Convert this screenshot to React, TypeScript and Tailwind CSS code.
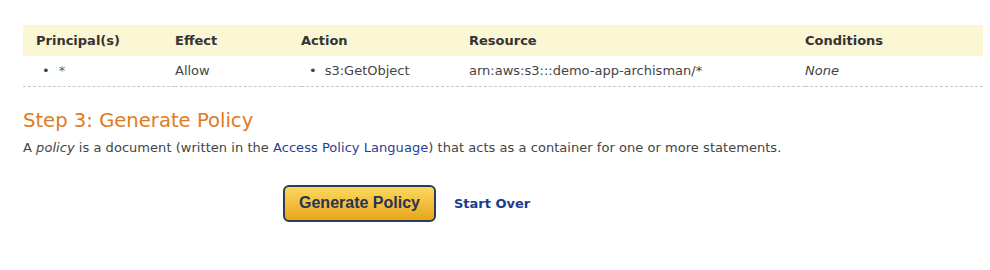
import React from "react";

const font = { fontFamily: '"DejaVu Sans", Verdana, sans-serif' };

export default function App() {
  return (
    <div className="w-[990px] h-[270px] bg-white text-[13px] text-[#444]" style={font}>
      <div className="pt-[25px] pl-[23px] pr-[7px]">
        {/* Statements table */}
        <table className="w-full border-collapse">
          <thead>
            <tr className="bg-[#fbf6d3] h-[31px] text-left text-[#333]">
              <th className="pl-[13px] w-[152px] font-bold">Principal(s)</th>
              <th className="w-[126px] font-bold">Effect</th>
              <th className="w-[168px] font-bold">Action</th>
              <th className="w-[336px] font-bold">Resource</th>
              <th className="font-bold">Conditions</th>
            </tr>
          </thead>
          <tbody>
            <tr className="h-[30px] border-b border-dashed border-[#c8c8c8]">
              <td className="pl-[13px]">
                <span className="pl-[6px] pr-[9px]">•</span>
                <span className="text-[#666]">*</span>
              </td>
              <td>Allow</td>
              <td>
                <span className="pl-[8px] pr-[8px]">•</span>s3:GetObject
              </td>
              <td>arn:aws:s3:::demo-app-archisman/*</td>
              <td className="italic">None</td>
            </tr>
          </tbody>
        </table>

        <h2 className="mt-[22px] text-[19.6px] leading-[24px] text-[#e07b22]">Step 3: Generate Policy</h2>
        <p className="mt-[7px] leading-[16px] tracking-[0.04px]">
          A <em>policy</em> is a document (written in the{" "}
          <a className="text-[#1f3f95]">Access Policy Language</a>) that acts as a container for one or more statements.
        </p>

        <div className="mt-[29px] pl-[260px] flex items-center gap-[18px]">
          <button
            className="w-[153px] h-[37px] rounded-[6px] border-2 border-[#2c3c5e] bg-gradient-to-b from-[#fad95a] to-[#e9a613] text-[16px] font-bold text-[#283454]"
            style={{ fontFamily: '"Liberation Sans", Arial, sans-serif' }}
          >
            Generate Policy
          </button>
          <a className="font-bold text-[#1d3a8c] mt-[2px]">Start Over</a>
        </div>
      </div>
    </div>
  );
}
